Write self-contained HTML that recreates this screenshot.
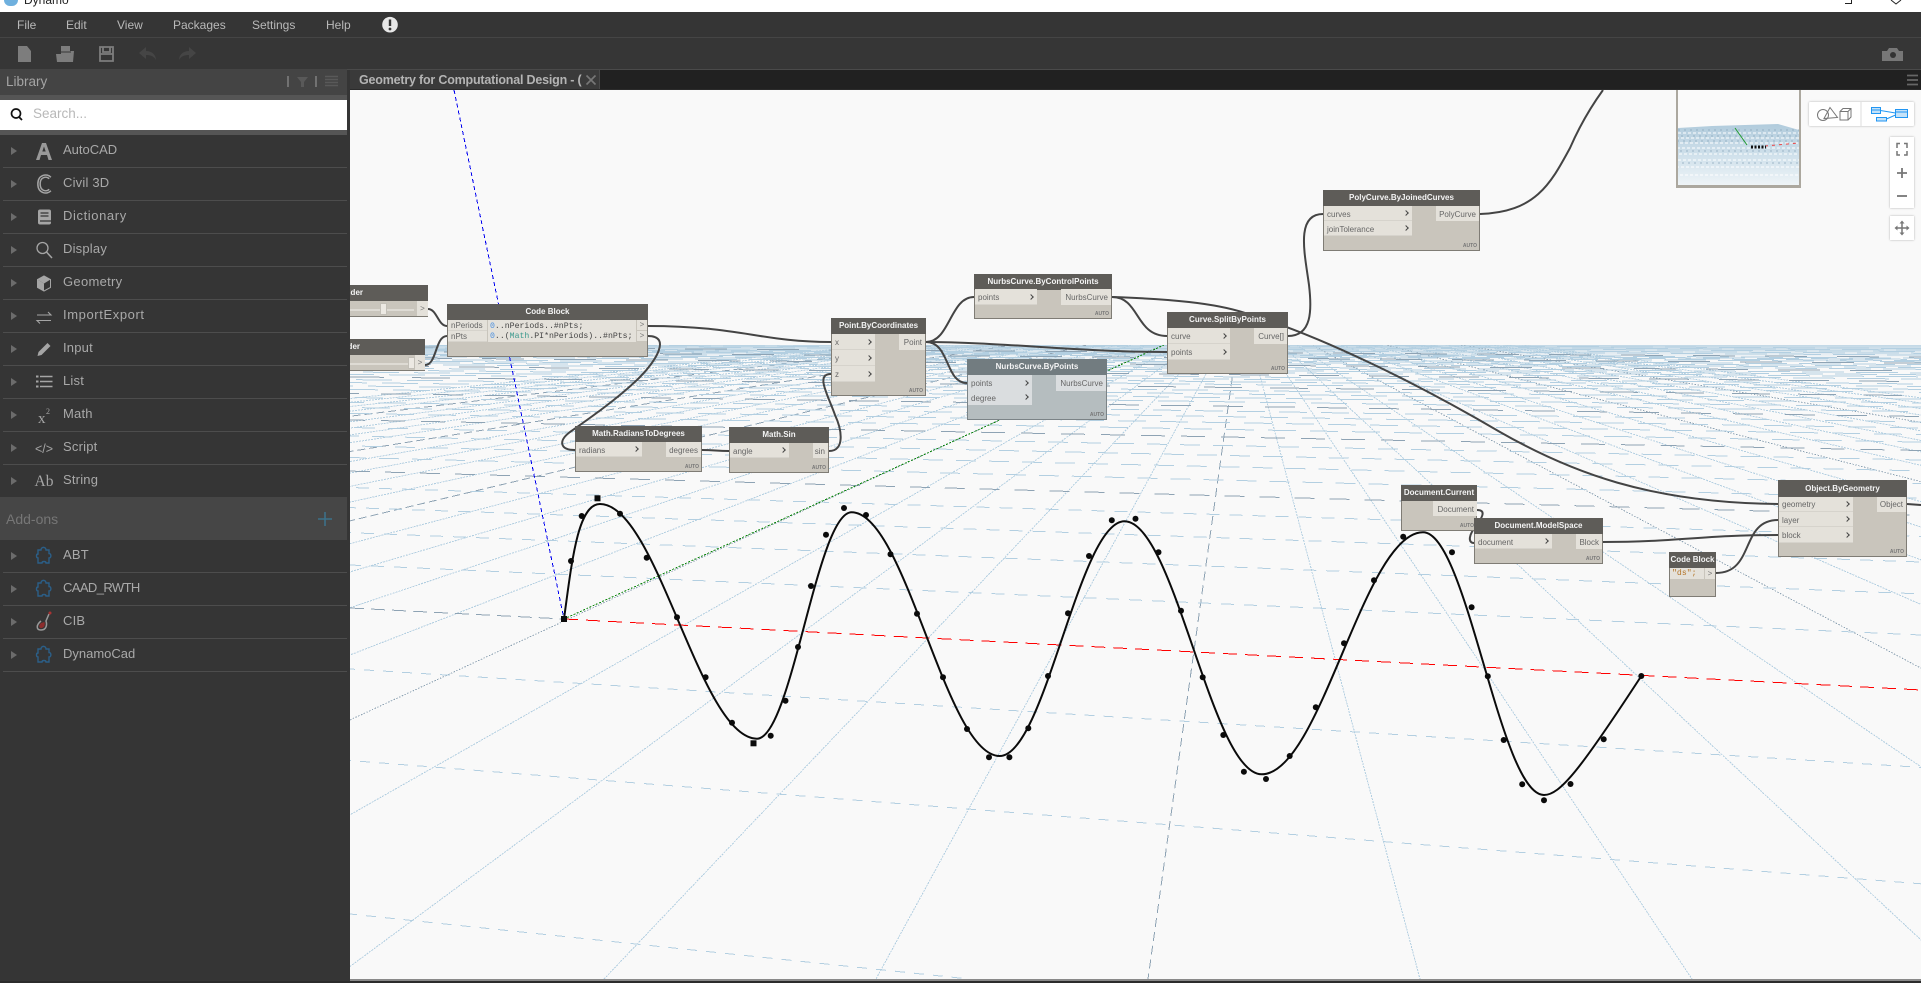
<!DOCTYPE html>
<html><head><meta charset="utf-8"><title>Dynamo</title>
<style>
html,body{margin:0;padding:0;background:#2b2b2b;width:1921px;height:983px;overflow:hidden}
#p{position:relative;width:1921px;height:983px;overflow:hidden;background:#2b2b2b;font-family:"Liberation Sans",sans-serif}
#p div,#p span{position:absolute;white-space:nowrap}
svg{position:absolute;left:0;top:0}
.m{top:18px;font-size:12px;line-height:14px;color:#b9b9b9}
.r{left:63px;font-size:13px;line-height:16px;color:#a9a9a9;letter-spacing:.2px}
.s{left:3px;width:344px;height:1px;background:#4d4d4d}
.n{background:#c9c5bc;border:1px solid #7f7c75;box-sizing:border-box;font-size:8px;color:#666}
.t{left:-1px;right:-1px;top:-1px;background:#5e5c58;color:#f4f4f4;font-weight:bold;text-align:center;font-size:8px}
.i{left:0;background:#e4e1da;box-shadow:inset 0 -1px 0 #d6d3cc;padding-left:3px;padding-top:1px;box-sizing:border-box}
.o{background:#e4e1da;text-align:right;padding-right:3px;padding-top:1px;box-sizing:border-box}
.i i{position:absolute;right:4px;top:50%;width:3px;height:3px;margin-top:-2.5px;border-top:1.6px solid #454545;border-right:1.6px solid #454545;transform:rotate(45deg)}
.a{right:2px;bottom:1px;font-size:5px;line-height:6px;font-weight:bold;color:#777}
.f{background:#b5bdbf;border-color:#7b8386}
.f .t{background:#727c80}
.f .i,.f .o{background:#dadddf;box-shadow:none}
.c{font-family:"Liberation Mono",monospace;font-size:8.2px;color:#444;padding-left:2px;box-sizing:border-box;background:#e4e1da}
.c b{font-weight:normal;color:#4a8fe0}.c u{text-decoration:none;color:#3c9a8e}
.g{background:#e4e1da;color:#777;text-align:center;font-size:8px}
</style></head><body><div id="p">

<!-- title bar -->
<div style="left:0;top:0;width:1921px;height:12px;background:#fff;overflow:hidden">
<div style="left:4px;top:-7px;width:14px;height:13px;background:#6fb0de;border-radius:6px"></div>
<span style="left:24px;top:-8px;font-size:12px;line-height:16px;color:#222">Dynamo</span>
<svg width="1921" height="12"><path d="M1845 3.500h6.500v-3.500" fill="none" stroke="#222"/><path d="M1891 0l5 4 5-4" fill="none" stroke="#222"/></svg>
</div>

<!-- menu + toolbar -->
<div style="left:0;top:12px;width:1921px;height:25px;background:#353535"></div>
<div style="left:0;top:37px;width:1921px;height:1px;background:#454545"></div>
<div style="left:0;top:38px;width:1921px;height:31px;background:#363636"></div>
<div style="left:0;top:69px;width:1921px;height:1px;background:#4a4a4a"></div>
<span class="m" style="left:17px">File</span>
<span class="m" style="left:66px">Edit</span>
<span class="m" style="left:117px">View</span>
<span class="m" style="left:173px">Packages</span>
<span class="m" style="left:252px">Settings</span>
<span class="m" style="left:326px">Help</span>

<!-- tab bar -->
<div style="left:350px;top:70px;width:1571px;height:19px;background:#212121"></div>
<div style="left:350px;top:70px;width:249px;height:19px;background:#3a3a3a;border-right:1px solid #4a4a4a"></div>
<span style="left:359px;top:72px;font-size:12.500px;line-height:16px;font-weight:bold;color:#b4b4b4;letter-spacing:-.2px;width:225px;overflow:hidden">Geometry for Computational Design - (</span>

<!-- canvas -->
<div style="left:350px;top:90px;width:1571px;height:889px;background:#f9f9f9"></div>
<div style="left:350px;top:979px;width:1571px;height:2px;background:#8a8a8a"></div>
<div style="left:350px;top:345px;width:1571px;height:14px;background:linear-gradient(#c2d8e6,rgba(210,226,236,.4) 70%,rgba(249,249,249,0))"></div>

<svg width="1921" height="983" viewBox="0 0 1921 983" fill="none">
<defs><clipPath id="g"><rect x="350" y="345" width="1571" height="634"/></clipPath>
<clipPath id="w"><rect x="350" y="90" width="1571" height="889"/></clipPath></defs>
<g clip-path="url(#g)">
<!-- radial lines -->
<g stroke="#b3cfe1" stroke-width="1" stroke-dasharray="2 1" shape-rendering="crispEdges">
<path d="M1242 308L876 979M1242 308L604 979M1242 308L333 979M1242 308L61 979M1242 308L-483 979M1242 308L-755 979M1242 308L-1026 979M1242 308L-1298 979M1242 308L-1842 979M1242 308L-2114 979M1242 308L-2385 979M1242 308L-2657 979M1242 308L-3201 979M1242 308L-3473 979M1242 308L-3744 979M1242 308L-4016 979M1242 308L-4560 979M1242 308L-4832 979M1242 308L-5103 979M1242 308L-5375 979"/>
<path d="M1242 308L1420 979M1242 308L1692 979M1242 308L1963 979M1242 308L2235 979M1242 308L2779 979M1242 308L3051 979M1242 308L3322 979M1242 308L3594 979M1242 308L4138 979M1242 308L4410 979M1242 308L4681 979M1242 308L4953 979M1242 308L5497 979M1242 308L5769 979M1242 308L6040 979M1242 308L6312 979"/>
</g>
<g stroke="#8ea3b4" stroke-width="1" shape-rendering="crispEdges">
<path d="M1242 308L1148 979" stroke-dasharray="9 5"/>
<path d="M1242 308L-211 979" stroke-dasharray="1.500 1.500"/>
<path d="M1242 308L-1570 979" stroke-dasharray="8 4"/>
<path d="M1242 308L-2929 979" stroke-dasharray="8 4"/>
<path d="M1242 308L-4288 979" stroke-dasharray="8 4"/>
<path d="M1242 308L2507 979" stroke-dasharray="1.500 1.500"/>
<path d="M1242 308L3866 979" stroke-dasharray="1.500 1.500"/>
<path d="M1242 308L5225 979" stroke-dasharray="1.500 1.500"/>
</g>
<!-- cross lines: light -->
<g stroke="#b3cfe1" stroke-width="1" shape-rendering="crispEdges">
<g stroke-dasharray="10 9">
<path d="M350 914L969 979" stroke-dashoffset="3"/>
<path d="M350 760.500L1921 883.800" stroke-dashoffset="9"/>
<path d="M350 669L1921 767.400" stroke-dashoffset="5"/>
</g>
<g stroke-dasharray="13 10">
<path d="M350 565L1921 635" stroke-dashoffset="2"/>
<path d="M350 532.700L1921 593.900" stroke-dashoffset="12"/>
<path d="M350 507.600L1921 562" stroke-dashoffset="7"/>
<path d="M350 487.500L1921 536.400" stroke-dashoffset="17"/>
</g>
<g stroke-dasharray="20 13">
<path d="M350 457.500L1921 498.200" stroke-dashoffset="4"/>
<path d="M350 445.900L1921 483.500" stroke-dashoffset="21"/>
<path d="M350 436L1921 470.900" stroke-dashoffset="11"/>
<path d="M350 427.500L1921 460" stroke-dashoffset="28"/>
</g>
<g stroke-dasharray="28 14">
<path d="M350 413.400L1921 442.100" stroke-dashoffset="6"/>
<path d="M350 407.500L1921 434.600" stroke-dashoffset="30"/>
<path d="M350 402.300L1921 428" stroke-dashoffset="14"/>
<path d="M350 397.500L1921 421.900" stroke-dashoffset="37"/>
</g>
<g stroke-dasharray="36 15">
<path d="M350 389.400L1921 411.600" stroke-dashoffset="8"/>
<path d="M350 385.900L1921 407.100" stroke-dashoffset="33"/>
<path d="M350 382.600L1921 402.900" stroke-dashoffset="19"/>
<path d="M350 379.600L1921 399.100" stroke-dashoffset="45"/>
<path d="M350 374.300L1921 392.400" stroke-dashoffset="12"/>
<path d="M350 372L1921 389.400" stroke-dashoffset="38"/>
<path d="M350 369.800L1921 386.600" stroke-dashoffset="24"/>
<path d="M350 367.700L1921 384" stroke-dashoffset="3"/>
</g>
<g stroke-dasharray="42 12">
<path d="M350 363.900L1921 379.100" stroke-dashoffset="15"/>
<path d="M350 362.100L1921 376.800" stroke-dashoffset="40"/>
<path d="M350 360.500L1921 374.800" stroke-dashoffset="27"/>
<path d="M350 359L1921 372.900" stroke-dashoffset="6"/>
<path d="M350 356.200L1921 369.300" stroke-dashoffset="33"/>
<path d="M350 354.900L1921 367.700" stroke-dashoffset="18"/>
<path d="M350 353.700L1921 366.200" stroke-dashoffset="47"/>
<path d="M350 352.500L1921 364.600" stroke-dashoffset="9"/>
<path d="M350 350.300L1921 361.800" stroke-dashoffset="36"/>
<path d="M350 349.300L1921 360.600" stroke-dashoffset="22"/>
<path d="M350 348.400L1921 359.400" stroke-dashoffset="51"/>
<path d="M350 347.500L1921 358.300" stroke-dashoffset="13"/>
<path d="M350 345L1921 355" stroke-dashoffset="29"/>
<path d="M350 343.600L1921 353.300" stroke-dashoffset="5"/>
<path d="M350 342.200L1921 351.500" stroke-dashoffset="43"/>
<path d="M350 341L1921 350" stroke-dashoffset="20"/>
<path d="M350 339.800L1921 348.500" stroke-dashoffset="35"/>
</g>
</g>
<!-- cross lines: dark -->
<g stroke="#8ea3b4" stroke-width="1" shape-rendering="crispEdges">
<path d="M350 471.100L1921 515.500" stroke-dasharray="20 15"/>
<path d="M350 420L1921 450.500" stroke-dasharray="24 16" stroke-dashoffset="9"/>
<path d="M350 393.300L1921 416.500" stroke-dasharray="30 22" stroke-dashoffset="21"/>
<path d="M350 376.900L1921 395.700" stroke-dasharray="38 28" stroke-dashoffset="4"/>
<path d="M350 365.800L1921 381.600" stroke-dasharray="40 30" stroke-dashoffset="31"/>
<path d="M350 357.500L1921 371" stroke-dasharray="42 30" stroke-dashoffset="12"/>
<path d="M350 351.400L1921 363.200" stroke-dasharray="42 30" stroke-dashoffset="50"/>
<path d="M350 346.600L1921 357.100" stroke-dasharray="42 30" stroke-dashoffset="25"/>
<path d="M350 608L564 619" stroke-dasharray="14 7"/>
</g>
<path d="M564 619L1921 690" stroke="#f00" stroke-width="1" stroke-dasharray="14 8" shape-rendering="crispEdges"/>
<path d="M564 619L1164 345" stroke="#0a850a" stroke-width="1" stroke-dasharray="2 1.500" shape-rendering="crispEdges"/>
</g>
<path d="M454 90L564 619" stroke="#0000f0" stroke-width="1" stroke-dasharray="4 3" shape-rendering="crispEdges"/>

<!-- sine curve -->
<path d="M564 619C572 560 578 504 600 504C657 504 700 738.700 757 738.700C791.500 738.700 817 512.300 851.600 512.300C905.600 512.300 945.700 756 999.700 756C1045 756 1079 521.300 1124.500 521.300C1174.500 521.300 1211.700 774.300 1261.700 774.300C1320.700 774.300 1364 532.300 1423 532.300C1467 532.300 1500 795 1544 795C1560 795 1580 770 1641.300 676" stroke="#0b0b0b" stroke-width="2"/>
<g fill="#0b0b0b">
<rect x="561" y="616" width="6" height="6"/>
<circle cx="571" cy="561" r="3"/><circle cx="581.700" cy="516" r="3"/><rect x="594.500" y="495.300" width="6" height="6"/><circle cx="620" cy="513.700" r="3"/><circle cx="646.700" cy="557.700" r="3"/><circle cx="677" cy="617.300" r="3"/><circle cx="705.600" cy="677.300" r="3"/><circle cx="732" cy="722.700" r="3"/><rect x="750.500" y="740.300" width="6" height="6"/><circle cx="770.700" cy="735.700" r="3"/><circle cx="785.500" cy="700.700" r="3"/><circle cx="798" cy="647" r="3"/><circle cx="811" cy="586" r="3"/><circle cx="826" cy="534.700" r="3"/><circle cx="844" cy="508" r="3"/><circle cx="866" cy="515" r="3"/><circle cx="890.500" cy="554.300" r="3"/><circle cx="917" cy="613.700" r="3"/><circle cx="943" cy="677.300" r="3"/><circle cx="967" cy="729" r="3"/><circle cx="989" cy="757.300" r="3"/><circle cx="1009.400" cy="757.300" r="3"/><circle cx="1028.300" cy="728.300" r="3"/><circle cx="1048" cy="676" r="3"/><circle cx="1068" cy="613.300" r="3"/><circle cx="1089" cy="556" r="3"/><circle cx="1111.800" cy="520.300" r="3"/><circle cx="1135.500" cy="518.700" r="3"/><circle cx="1158.500" cy="552.300" r="3"/><circle cx="1181" cy="610.700" r="3"/><circle cx="1202.700" cy="677.300" r="3"/><circle cx="1223.300" cy="735" r="3"/><circle cx="1243.900" cy="771.700" r="3"/><circle cx="1266" cy="779" r="3"/><circle cx="1289.700" cy="756" r="3"/><circle cx="1315.800" cy="707.300" r="3"/><circle cx="1344" cy="643.300" r="3"/><circle cx="1374" cy="580.300" r="3"/><circle cx="1403.200" cy="536.700" r="3"/><circle cx="1452" cy="552.300" r="3"/><circle cx="1471.600" cy="607.300" r="3"/><circle cx="1487.800" cy="676.300" r="3"/><circle cx="1503.700" cy="740" r="3"/><circle cx="1522.200" cy="784.300" r="3"/><circle cx="1544" cy="800.300" r="3"/><circle cx="1570.500" cy="784" r="3"/><circle cx="1603.700" cy="739.300" r="3"/><circle cx="1641.300" cy="676" r="3"/>
</g>

<!-- wires -->
<g clip-path="url(#w)" stroke="#444" stroke-width="2">
<path d="M428 309C437 309 438 326 447 326"/>
<path d="M425 365C437 365 435 336 447 336"/>
<path d="M648 326C740 326 760 342 831 342"/>
<path d="M648 336C672 336 655 362 640 377C620 397 590 418 570 432C558 441 560 450 575 450"/>
<path d="M702 450C715 450 716 451 729 451"/>
<path d="M829 451C845 451 842 430 835 415C828 395 815 374 831 374"/>
<path d="M926 342C950 342 950 297 974 297"/>
<path d="M926 342C950 342 945 383 967 383"/>
<path d="M926 342C1000 342 1080 352 1167 352"/>
<path d="M1112 297C1140 297 1135 336 1167 336"/>
<path d="M1112 297C1170 299 1215 303 1245 313C1320 335 1420 385 1500 432C1570 472 1650 503 1778 504"/>
<path d="M1288 336C1312 336 1312 310 1309 285C1305 255 1295 214 1323 214"/>
<path d="M1480 214C1535 212 1550 185 1570 148C1580 125 1590 108 1603 90"/>
<path d="M1477 510C1488 510 1480 520 1477 525C1468 535 1468 543 1474 543"/>
<path d="M1602 542C1680 542 1700 535 1778 535"/>
<path d="M1716 573C1755 573 1740 520 1778 520"/>
<path d="M1907 504L1921 505"/>
</g>
</svg>

<!-- preview -->
<div style="left:1676px;top:90px;width:125px;height:98px;border:solid #aca89f;border-width:0 2px 3px;box-sizing:border-box;background:#fafafa;overflow:hidden"></div>
<svg width="1921" height="983" viewBox="0 0 1921 983" fill="none">
<defs><linearGradient id="tg" x1="0" y1="0" x2="0" y2="1"><stop offset="0" stop-color="#b0cbdc"/><stop offset=".55" stop-color="#d2e2ec"/><stop offset="1" stop-color="#eef4f7"/></linearGradient></defs>
<path d="M1678 128L1712 126L1778 124L1799 130V185H1678Z" fill="url(#tg)"/>
<g stroke="#fff" stroke-width="1" stroke-dasharray="3 2" shape-rendering="crispEdges">
<path d="M1678 133H1799"/><path d="M1678 138H1799" stroke-dashoffset="2"/><path d="M1678 143H1799" stroke-dashoffset="3"/><path d="M1678 148H1799" stroke-dashoffset="1"/><path d="M1678 154H1799" stroke-dashoffset="4"/><path d="M1678 160H1799"/><path d="M1678 167H1799" stroke-dashoffset="2"/><path d="M1678 175H1799" stroke-dashoffset="3"/></g>
<g stroke="#86a4b8" stroke-width="1" stroke-dasharray="2 4" opacity=".7" shape-rendering="crispEdges">
<path d="M1678 130H1799"/><path d="M1678 136H1799" stroke-dashoffset="3"/><path d="M1678 141H1799" stroke-dashoffset="1"/><path d="M1678 151H1799" stroke-dashoffset="4"/><path d="M1678 163H1799" stroke-dashoffset="2"/></g>
<path d="M1735 128L1747 145" stroke="#1f9a30"/>
<path d="M1765 146L1798 143" stroke="#e44" stroke-dasharray="3 4"/>
<path d="M1751 147h15" stroke="#111" stroke-width="3" stroke-dasharray="2 1.500"/>
</svg>

<!-- nodes -->
<div class="n" style="left:270px;top:285px;width:158px;height:32px"><div class="t" style="height:16px;line-height:16px;text-align:right;padding-right:65px;box-sizing:border-box">Integer Slider</div><div style="left:0;top:23px;width:143px;height:2px;background:#dedbd4"></div><div style="left:109px;top:17px;width:7px;height:12px;background:#ece9e3;border:1px solid #c2bfb7;box-sizing:border-box"></div><div class="g" style="left:146px;top:15px;width:11px;height:15px;line-height:15px">&gt;</div></div>
<div class="n" style="left:270px;top:339px;width:155px;height:32px"><div class="t" style="height:16px;line-height:16px;text-align:right;padding-right:65px;box-sizing:border-box">Integer Slider</div><div style="left:0;top:23px;width:143px;height:2px;background:#dedbd4"></div><div style="left:137px;top:17px;width:7px;height:12px;background:#ece9e3;border:1px solid #c2bfb7;box-sizing:border-box"></div><div class="g" style="left:144px;top:15px;width:10px;height:15px;line-height:15px">&gt;</div></div>

<div class="n" style="left:447px;top:304px;width:201px;height:53px"><div class="t" style="height:16px;line-height:16px">Code Block</div>
<div class="i" style="top:15px;width:39px;height:11px;line-height:10px">nPeriods</div><div class="i" style="top:26px;width:39px;height:11px;line-height:10px">nPts</div>
<div class="c" style="left:40px;top:15px;width:148px;height:22px;line-height:10.500px;padding-top:1.500px"><b>0</b>..nPeriods..#nPts;<br><b>0</b>..(<u>Math</u>.PI*nPeriods)..#nPts;</div>
<div class="g" style="left:189px;top:15px;width:10px;height:10px;line-height:10px">&gt;</div><div class="g" style="left:189px;top:26px;width:10px;height:10px;line-height:10px">&gt;</div></div>

<div class="n" style="left:831px;top:318px;width:95px;height:78px"><div class="t" style="height:16px;line-height:16px">Point.ByCoordinates</div>
<div class="i" style="top:15px;width:43px;height:16px;line-height:15px">x<i></i></div><div class="i" style="top:31px;width:43px;height:16px;line-height:15px">y<i></i></div><div class="i" style="top:47px;width:43px;height:16px;line-height:15px">z<i></i></div>
<div class="o" style="left:67px;top:15px;width:26px;height:16px;line-height:15px">Point</div><div class="a">AUTO</div></div>

<div class="n" style="left:575px;top:426px;width:127px;height:46px"><div class="t" style="height:16px;line-height:16px">Math.RadiansToDegrees</div>
<div class="i" style="top:15px;width:66px;height:15px;line-height:15px">radians<i></i></div><div class="o" style="left:90px;top:15px;width:35px;height:15px;line-height:15px">degrees</div><div class="a">AUTO</div></div>

<div class="n" style="left:729px;top:427px;width:100px;height:46px"><div class="t" style="height:16px;line-height:16px">Math.Sin</div>
<div class="i" style="top:15px;width:59px;height:15px;line-height:15px">angle<i></i></div><div class="o" style="left:83px;top:15px;width:15px;height:15px;line-height:15px">sin</div><div class="a">AUTO</div></div>

<div class="n" style="left:974px;top:274px;width:138px;height:45px"><div class="t" style="height:16px;line-height:16px">NurbsCurve.ByControlPoints</div>
<div class="i" style="top:14px;width:62px;height:16px;line-height:16px">points<i></i></div><div class="o" style="left:86px;top:14px;width:50px;height:16px;line-height:16px">NurbsCurve</div><div class="a">AUTO</div></div>

<div class="n f" style="left:967px;top:359px;width:140px;height:61px"><div class="t" style="height:16px;line-height:16px">NurbsCurve.ByPoints</div>
<div class="i" style="top:15px;width:64px;height:16px;line-height:15px">points<i></i></div><div class="i" style="top:30px;width:64px;height:15px;line-height:15px">degree<i></i></div><div class="o" style="left:88px;top:15px;width:50px;height:16px;line-height:15px">NurbsCurve</div><div class="a">AUTO</div></div>

<div class="n" style="left:1167px;top:312px;width:121px;height:62px"><div class="t" style="height:16px;line-height:16px">Curve.SplitByPoints</div>
<div class="i" style="top:15px;width:62px;height:16px;line-height:15px">curve<i></i></div><div class="i" style="top:31px;width:62px;height:16px;line-height:15px">points<i></i></div><div class="o" style="left:86px;top:15px;width:33px;height:16px;line-height:15px">Curve[]</div><div class="a">AUTO</div></div>

<div class="n" style="left:1323px;top:190px;width:157px;height:61px"><div class="t" style="height:16px;line-height:16px">PolyCurve.ByJoinedCurves</div>
<div class="i" style="top:15px;width:88px;height:15px;line-height:15px">curves<i></i></div><div class="i" style="top:30px;width:88px;height:15px;line-height:15px">joinTolerance<i></i></div><div class="o" style="left:112px;top:15px;width:43px;height:15px;line-height:15px">PolyCurve</div><div class="a">AUTO</div></div>

<div class="n" style="left:1401px;top:485px;width:76px;height:46px"><div class="t" style="height:16px;line-height:16px">Document.Current</div>
<div class="o" style="left:31px;top:15px;width:44px;height:15px;line-height:15px">Document</div><div class="a">AUTO</div></div>

<div class="n" style="left:1474px;top:518px;width:129px;height:46px"><div class="t" style="height:16px;line-height:16px">Document.ModelSpace</div>
<div class="i" style="top:15px;width:77px;height:15px;line-height:15px">document<i></i></div><div class="o" style="left:101px;top:15px;width:26px;height:15px;line-height:15px">Block</div><div class="a">AUTO</div></div>

<div class="n" style="left:1669px;top:552px;width:47px;height:45px"><div class="t" style="height:16px;line-height:16px">Code Block</div>
<div class="c" style="left:0;top:15px;width:34px;height:11px;line-height:11px;color:#b5762a">"ds";</div><div class="g" style="left:35px;top:15px;width:10px;height:11px;line-height:11px">&gt;</div></div>

<div class="n" style="left:1778px;top:480px;width:129px;height:77px"><div class="t" style="height:17px;line-height:17px">Object.ByGeometry</div>
<div class="i" style="top:16px;width:74px;height:15px;line-height:14px">geometry<i></i></div><div class="i" style="top:31px;width:74px;height:15px;line-height:15px">layer<i></i></div><div class="i" style="top:46px;width:74px;height:16px;line-height:15px">block<i></i></div><div class="o" style="left:98px;top:16px;width:29px;height:15px;line-height:14px">Object</div><div class="a">AUTO</div></div>

<!-- view controls -->
<div style="left:1809px;top:102px;width:105px;height:24px;background:#fff;box-shadow:0 0 2px rgba(0,0,0,.3);border-radius:1px"></div>
<div style="left:1890px;top:137px;width:24px;height:71px;background:#fff;box-shadow:0 0 2px rgba(0,0,0,.3)"></div>
<div style="left:1890px;top:216px;width:24px;height:24px;background:#fff;box-shadow:0 0 2px rgba(0,0,0,.3)"></div>
<svg width="1921" height="983" viewBox="0 0 1921 983" fill="none">
<path d="M1861 102V126" stroke="#ddd"/>
<g stroke="#777" stroke-width="1">
<circle cx="1823" cy="115" r="5.500"/><path d="M1824 118.500L1830 107.500L1837.500 117.500Z"/><path d="M1840 111.500h8v8.500h-8zM1840 111.500l3-3h8v8.500l-3 3M1848 111.500l3-3"/>
</g>
<g stroke="#2196f3" fill="#c5e2f8">
<rect x="1871.500" y="107.500" width="9" height="6"/><rect x="1895.500" y="109.500" width="12" height="8"/><rect x="1876.500" y="117.500" width="10" height="3.500"/><path d="M1880.500 110.500L1895.500 113M1886.500 119L1895.500 115" fill="none"/><path d="M1871.500 110h9M1895.500 112h12" fill="none"/>
</g>
<path d="M1897 148v-4.500h3M1904 143.500h3v4.500M1907 151v4h-3M1900 155h-3v-4" stroke="#777" stroke-width="1.500"/>
<path d="M1897 173h10M1902 168v10" stroke="#777" stroke-width="1.800"/>
<path d="M1897 196h10" stroke="#777" stroke-width="1.800"/>
<path d="M1896 228h12M1902 222v12" stroke="#777" stroke-width="1.500"/>
<path d="M1902 220.500l-2.500 3h5zM1902 235.500l-2.500-3h5zM1894.500 228l3-2.500v5zM1909.500 228l-3-2.500v5z" fill="#777"/>
</svg>

<!-- library panel -->
<div style="left:0;top:70px;width:350px;height:911px;background:#353535"></div>
<div style="left:0;top:69px;width:347px;height:26px;background:#444"></div>
<div style="left:0;top:95px;width:347px;height:5px;background:#555"></div>
<div style="left:0;top:100px;width:347px;height:30px;background:#fff"></div>
<div style="left:0;top:130px;width:347px;height:5px;background:#555"></div>
<div style="left:0;top:497px;width:347px;height:43px;background:#464646"></div>
<span style="left:6px;top:74px;font-size:13.500px;line-height:16px;color:#a4a4a4">Library</span>
<span style="left:33px;top:106px;font-size:13.500px;line-height:16px;color:#b8b8b8">Search...</span>
<span style="left:6px;top:510px;font-size:14px;line-height:18px;color:#767676">Add-ons</span>

<div class="s" style="top:167px"></div><div class="s" style="top:200px"></div><div class="s" style="top:233px"></div><div class="s" style="top:266px"></div><div class="s" style="top:299px"></div><div class="s" style="top:332px"></div><div class="s" style="top:365px"></div><div class="s" style="top:398px"></div><div class="s" style="top:431px"></div><div class="s" style="top:464px"></div>
<div class="s" style="top:572px"></div><div class="s" style="top:605px"></div><div class="s" style="top:638px"></div><div class="s" style="top:671px"></div>

<span class="r" style="top:142px;letter-spacing:0">AutoCAD</span>
<span class="r" style="top:175px">Civil 3D</span>
<span class="r" style="top:208px;letter-spacing:.6px">Dictionary</span>
<span class="r" style="top:241px">Display</span>
<span class="r" style="top:274px;letter-spacing:.3px">Geometry</span>
<span class="r" style="top:307px;letter-spacing:.6px">ImportExport</span>
<span class="r" style="top:340px">Input</span>
<span class="r" style="top:373px">List</span>
<span class="r" style="top:406px">Math</span>
<span class="r" style="top:439px">Script</span>
<span class="r" style="top:472px">String</span>
<span class="r" style="top:547px">ABT</span>
<span class="r" style="top:580px;letter-spacing:-.6px">CAAD_RWTH</span>
<span class="r" style="top:613px">CIB</span>
<span class="r" style="top:646px;letter-spacing:0">DynamoCad</span>

<svg width="420" height="983" viewBox="0 0 420 983" fill="none">
<!-- expand arrows -->
<g fill="#6c6c6c">
<path d="M11 147v8l6-4zM11 180v8l6-4zM11 213v8l6-4zM11 246v8l6-4zM11 279v8l6-4zM11 312v8l6-4zM11 345v8l6-4zM11 378v8l6-4zM11 411v8l6-4zM11 444v8l6-4zM11 477v8l6-4zM11 552v8l6-4zM11 585v8l6-4zM11 618v8l6-4zM11 651v8l6-4z"/>
</g>
<!-- library icons -->
<path d="M36 160L42 143H46L52 160H48.500L47 155H41L39.500 160ZM42.300 151.500H45.700L44 146.500Z" fill="#999" fill-rule="evenodd"/>
<path d="M50 178C47 174.500 39 175.500 39 184C39 192.500 47 193.500 50 190" stroke="#a5a5a5" stroke-width="3.800"/>
<path d="M50 178C47 174.500 39 175.500 39 184C39 192.500 47 193.500 50 190" stroke="#353535" stroke-width=".8"/>
<rect x="38" y="209.500" width="13" height="15" rx="2" fill="#a5a5a5"/>
<path d="M40.500 213h8M40.500 216h8M40 221h11" stroke="#353535" stroke-width="1.200"/>
<circle cx="42.500" cy="248" r="5.500" stroke="#a5a5a5" stroke-width="1.300"/><path d="M46.500 252L52 258" stroke="#a5a5a5" stroke-width="1.500"/>
<path d="M44 276l6.500 3.500v8l-6.500 3.500-6.500-3.500v-8z" stroke="#a5a5a5"/><path d="M44 283.500l-6.500-4v8l6.500 3.500z" fill="#a5a5a5"/><path d="M37.500 279.500L44 276l6.500 3.500-6.500 4z" fill="#a5a5a5"/>
<path d="M37 315H51l-3-3M51 320.500H37l3 3" stroke="#a5a5a5" stroke-width="1.100"/>
<path d="M37.500 356l1-4 9-9 3 3-9 9z" fill="#a5a5a5"/>
<path d="M36 376.500h2.500M36 381.500h2.500M36 386.500h2.500" stroke="#a5a5a5" stroke-width="2"/><path d="M40 376.500h12.500M40 381.500h12.500M40 386.500h12.500" stroke="#a5a5a5" stroke-width="1.500"/>
<text x="38" y="423" font-family="Liberation Serif,serif" font-size="15" fill="#a5a5a5">x</text><text x="46" y="414" font-family="Liberation Serif,serif" font-size="8" fill="#a5a5a5">2</text>
<text x="44" y="453" text-anchor="middle" font-family="Liberation Sans,sans-serif" font-size="12.500" fill="#a5a5a5">&lt;/&gt;</text>
<text x="44" y="486" text-anchor="middle" font-family="Liberation Serif,serif" font-size="15.500" fill="#a5a5a5">Ab</text>
<!-- puzzle icons -->
<g stroke="#2b5f88" stroke-width="1.400">
<path d="M38 550h3c0-3.500 5-3.500 5 0h3v3.500c2.500 0 2.500 4.500 0 4.500v5h-3c0-2-4-2-4 0h-4v-5c-2 0-2-4 0-4z"/>
<path transform="translate(0 33)" d="M38 550h3c0-3.500 5-3.500 5 0h3v3.500c2.500 0 2.500 4.500 0 4.500v5h-3c0-2-4-2-4 0h-4v-5c-2 0-2-4 0-4z"/>
<path transform="translate(0 99)" d="M38 550h3c0-3.500 5-3.500 5 0h3v3.500c2.500 0 2.500 4.500 0 4.500v5h-3c0-2-4-2-4 0h-4v-5c-2 0-2-4 0-4z"/>
</g>
<path d="M41 621C36 625 36 630 41 630C47 630 47 624 46 621L49 614" stroke="#999" stroke-width="1.500"/>
<path d="M41 623C38 626 39 628.500 42 628C45 627 45 624 44.500 622Z" fill="#8c2d2d"/>
<circle cx="50" cy="613" r="1.500" fill="#a33"/>
<!-- add-ons plus -->
<path d="M325 512v14M318 519h14" stroke="#3c7089" stroke-width="1.600"/>
<!-- header icons -->
<path d="M288 76v11M316 76v11" stroke="#8a8a8a" stroke-width="1.300"/>
<path d="M297 77h11l-4 5v5h-3v-5z" fill="#595959"/>
<path d="M325 76.500h13M325 79.500h13M325 82.500h13M325 85.500h13" stroke="#595959" stroke-width="1.600"/>
<!-- search icon -->
<circle cx="16" cy="113.500" r="4.500" stroke="#111" stroke-width="1.700"/><path d="M19 117l3 3" stroke="#111" stroke-width="1.800"/>
<!-- toolbar -->
<path d="M18 46h9l4 5v11H18z" fill="#7d7d7d"/>
<path d="M56 54h5v-8h9v5h4l-1 11H57z" fill="#7d7d7d"/><path d="M61 52h10" stroke="#363636"/>
<path d="M100 47h13v14h-13zM100 54h13M103 47v5h7v-5" stroke="#7d7d7d" stroke-width="1.800"/>
<path d="M139 53l7-6v4c6 0 10 4 10 9c-2-4-6-5-10-5v4z" fill="#454545"/>
<path d="M196 53l-7-6v4c-6 0-10 4-10 9c2-4 6-5 10-5v4z" fill="#454545"/>
<circle cx="390" cy="24.700" r="7.800" fill="#e6e6e6"/><path d="M390 19.500v6.500" stroke="#353535" stroke-width="2.400"/><circle cx="390" cy="29" r="1.400" fill="#353535"/>
</svg>

<!-- tab close, hamburger, camera -->
<svg width="1921" height="983" viewBox="0 0 1921 983" fill="none" style="pointer-events:none">
<path d="M586.500 75.500l9 9M595.500 75.500l-9 9" stroke="#777" stroke-width="1.600"/>
<path d="M1907 75.500h11M1907 80h11M1907 84.500h11" stroke="#666" stroke-width="1.800"/>
<path d="M1882 51h5l2-3h8l2 3h4v10h-21z" fill="#777"/><circle cx="1893" cy="55" r="3" fill="#333"/>
</svg>

</div></body></html>
